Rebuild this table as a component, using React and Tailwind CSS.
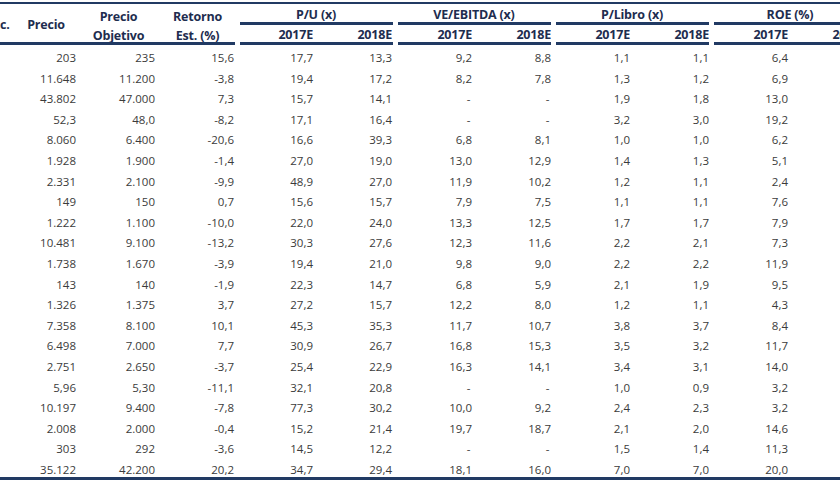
import React from "react";

const rows = [
  ["203", "235", "15,6", "17,7", "13,3", "9,2", "8,8", "1,1", "1,1", "6,4"],
  ["11.648", "11.200", "-3,8", "19,4", "17,2", "8,2", "7,8", "1,3", "1,2", "6,9"],
  ["43.802", "47.000", "7,3", "15,7", "14,1", "-", "-", "1,9", "1,8", "13,0"],
  ["52,3", "48,0", "-8,2", "17,1", "16,4", "-", "-", "3,2", "3,0", "19,2"],
  ["8.060", "6.400", "-20,6", "16,6", "39,3", "6,8", "8,1", "1,0", "1,0", "6,2"],
  ["1.928", "1.900", "-1,4", "27,0", "19,0", "13,0", "12,9", "1,4", "1,3", "5,1"],
  ["2.331", "2.100", "-9,9", "48,9", "27,0", "11,9", "10,2", "1,2", "1,1", "2,4"],
  ["149", "150", "0,7", "15,6", "15,7", "7,9", "7,5", "1,1", "1,1", "7,6"],
  ["1.222", "1.100", "-10,0", "22,0", "24,0", "13,3", "12,5", "1,7", "1,7", "7,9"],
  ["10.481", "9.100", "-13,2", "30,3", "27,6", "12,3", "11,6", "2,2", "2,1", "7,3"],
  ["1.738", "1.670", "-3,9", "19,4", "21,0", "9,8", "9,0", "2,2", "2,2", "11,9"],
  ["143", "140", "-1,9", "22,3", "14,7", "6,8", "5,9", "2,1", "1,9", "9,5"],
  ["1.326", "1.375", "3,7", "27,2", "15,7", "12,2", "8,0", "1,2", "1,1", "4,3"],
  ["7.358", "8.100", "10,1", "45,3", "35,3", "11,7", "10,7", "3,8", "3,7", "8,4"],
  ["6.498", "7.000", "7,7", "30,9", "26,7", "16,8", "15,3", "3,5", "3,2", "11,7"],
  ["2.751", "2.650", "-3,7", "25,4", "22,9", "16,3", "14,1", "3,4", "3,1", "14,0"],
  ["5,96", "5,30", "-11,1", "32,1", "20,8", "-", "-", "1,0", "0,9", "3,2"],
  ["10.197", "9.400", "-7,8", "77,3", "30,2", "10,0", "9,2", "2,4", "2,3", "3,2"],
  ["2.008", "2.000", "-0,4", "15,2", "21,4", "19,7", "18,7", "2,1", "2,0", "14,6"],
  ["303", "292", "-3,6", "14,5", "12,2", "-", "-", "1,5", "1,4", "11,3"],
  ["35.122", "42.200", "20,2", "34,7", "29,4", "18,1", "16,0", "7,0", "7,0", "20,0"],
];

const groups = ["P/U (x)", "VE/EBITDA (x)", "P/Libro (x)", "ROE (%)"];
const groupCols = ["col-start-5", "col-start-7", "col-start-9", "col-start-11"];
const grid = "grid grid-cols-[13px_66px_79px_79px_79px_79px_79px_79px_79px_79px_79px_79px]";

export default function App() {
  return (
    <div
      className="w-[840px] h-[480px] overflow-hidden bg-white"
      style={{ fontFamily: '"Open Sans", "Liberation Sans", Arial, sans-serif' }}
    >
      <div className="w-[869px]">
        <div className="mt-[2px] h-[2px] bg-[#213a63]" />
        {/* header */}
        <div className={`${grid} grid-rows-[18px_3px_17px_3px] text-[12.5px] font-bold tracking-[-0.2px] text-[#1e2d4f]`}>
          <div className="col-start-1 row-start-1 row-span-3 flex items-center pt-[4px] leading-[14px] whitespace-nowrap">
            c.
          </div>
          <div className="col-start-2 row-start-1 row-span-3 flex items-center justify-center pt-[4px] leading-[14px]">
            Precio
          </div>
          <div className="col-start-3 row-start-1 row-span-3 text-center pt-[3px] leading-[19px]">
            Precio
            <br />
            Objetivo
          </div>
          <div className="col-start-4 row-start-1 row-span-3 text-center pt-[3px] leading-[19px]">
            Retorno
            <br />
            Est. (%)
          </div>
          {groups.map((g, i) => (
            <div
              key={g}
              className={`${groupCols[i]} col-span-2 row-start-1 flex items-center justify-center pt-[4px] leading-[14px] whitespace-nowrap`}
            >
              {g}
            </div>
          ))}
          {groups.map((g, i) => (
            <div
              key={g + "l"}
              className={`${groupCols[i]} col-span-2 row-start-2 ml-[3px] mr-[2px] bg-[#213a63]`}
            />
          ))}
          {groups.map((g, i) =>
            ["2017E", "2018E"].map((y, j) => (
              <div
                key={g + y}
                className={`row-start-3 flex items-center justify-end pt-[3px] leading-[14px] whitespace-nowrap ${i === 0 ? "pr-[3px]" : "pr-[2px]"}`}
                style={{ gridColumnStart: 5 + i * 2 + j }}
              >
                {y}
              </div>
            ))
          )}
          <div className="col-start-1 col-span-4 row-start-4 mr-[2px] bg-[#213a63]" />
          {groups.map((g, i) => (
            <div
              key={g + "b"}
              className={`${groupCols[i]} col-span-2 row-start-4 ml-[3px] mr-[2px] bg-[#213a63]`}
            />
          ))}
        </div>
        {/* body */}
        <div className="text-[11.5px] text-[#3b3b3b]">
          {rows.map((r, ri) => (
            <div key={ri} className={`${grid} h-[20.6px]`}>
              <div />
              {r.map((v, ci) => (
                <div
                  key={ci}
                  className={`pt-[6px] leading-[14px] text-right whitespace-nowrap ${ci < 5 ? "pr-[3px]" : "pr-[2px]"}`}
                >
                  {v === "-" ? <span className="pr-[1.5px]">-</span> : v}
                </div>
              ))}
              <div />
            </div>
          ))}
        </div>
        <div className="h-[2.5px] bg-[#213a63]" />
      </div>
    </div>
  );
}
